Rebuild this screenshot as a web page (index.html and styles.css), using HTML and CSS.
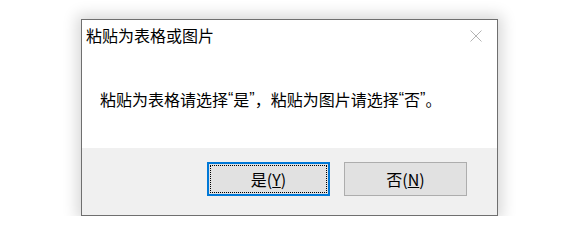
FILE: index.html
```html
<!DOCTYPE html>
<html lang="zh-CN">
<head>
  <meta charset="UTF-8" />
  <title>粘贴为表格或图片</title>
  <link rel="stylesheet" href="styles.css">
</head>
<body>
  <div class="dialog">
    <div class="titlebar">
      <span class="title">粘贴为表格或图片</span>
      <span class="close">
        <svg width="12" height="12" viewBox="0 0 12 12">
          <path d="M0.5 0.5 L11.5 11.5 M11.5 0.5 L0.5 11.5" stroke="#b4b4b4" stroke-width="1" fill="none"/>
        </svg>
      </span>
    </div>
    <div class="message">粘贴为表格请选择<span class="q">“</span>是<span class="q">”</span>，粘贴为图片请选择<span class="q">“</span>否<span class="q">”</span>。</div>
    <div class="footer">
      <button class="btn default">是(<u>Y</u>)</button>
      <button class="btn">否(<u>N</u>)</button>
    </div>
  </div>
</body>
</html>
```

FILE: styles.css
```css
body {
  margin: 0;
  padding: 0;
  background: #fff;
  font-family: "Noto Sans CJK SC", "Noto Sans", sans-serif;
  color: #000;
}
.dialog {
  margin: 19px 0 0 81px;
  width: 415px;
  height: 195px;
  border: 1px solid #6f6f6f;
  background: #fff;
  box-shadow: 0 0 14px 4px rgba(0,0,0,0.16);
  display: flex;
  flex-direction: column;
}
.titlebar {
  height: 30px;
  display: flex;
  align-items: center;
  justify-content: space-between;
  padding: 0 15px 0 4px;
}
.title {
  font-size: 16px;
  line-height: 18px;
}
.close {
  display: flex;
  margin-top: 1px;
}
.message {
  height: 98px;
  padding: 0 0 0 18px;
  font-size: 16px;
  line-height: 18px;
  display: flex;
  align-items: center;
  white-space: pre;
}
.q {
  font-family: "Liberation Sans", sans-serif;
}
.footer {
  flex: 1;
  background: #f0f0f0;
  display: flex;
  justify-content: flex-end;
  align-items: flex-start;
  gap: 14px;
  padding: 14px 30px 0 0;
}
.btn {
  width: 123px;
  height: 34px;
  background: #e1e1e1;
  border: 1px solid #adadad;
  font-family: "Noto Sans CJK SC", "Noto Sans", sans-serif;
  font-size: 16px;
  color: #000;
  padding: 0;
  margin: 0;
}
.btn.default {
  border: 2px solid #0078d7;
  outline: 1px dotted #000;
  outline-offset: -4px;
}
```
